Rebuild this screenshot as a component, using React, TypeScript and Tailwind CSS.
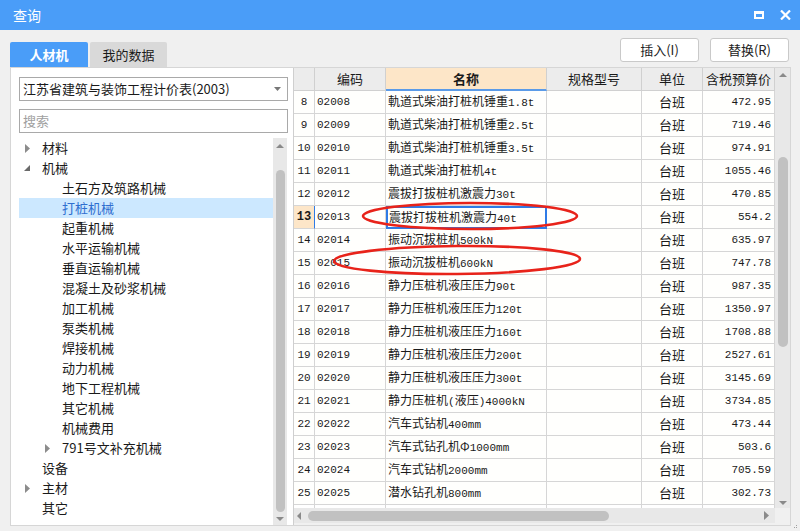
import React from "react";

const ui = "font-['Noto_Sans_CJK_SC',sans-serif]";
const mono = "font-['Liberation_Mono','Noto_Sans_CJK_SC',monospace]";

const rows = [
  ["8", "02008", "軌道式柴油打桩机锤重1.8t", "472.95"],
  ["9", "02009", "軌道式柴油打桩机锤重2.5t", "719.46"],
  ["10", "02010", "軌道式柴油打桩机锤重3.5t", "974.91"],
  ["11", "02011", "軌道式柴油打桩机4t", "1055.46"],
  ["12", "02012", "震拔打拔桩机激震力30t", "470.85"],
  ["13", "02013", "震拔打拔桩机激震力40t", "554.2"],
  ["14", "02014", "振动沉拔桩机500kN", "635.97"],
  ["15", "02015", "振动沉拔桩机600kN", "747.78"],
  ["16", "02016", "静力压桩机液压压力90t", "987.35"],
  ["17", "02017", "静力压桩机液压压力120t", "1350.97"],
  ["18", "02018", "静力压桩机液压压力160t", "1708.88"],
  ["19", "02019", "静力压桩机液压压力200t", "2527.61"],
  ["20", "02020", "静力压桩机液压压力300t", "3145.69"],
  ["21", "02021", "静力压桩机(液压)4000kN", "3734.85"],
  ["22", "02022", "汽车式钻机400mm", "473.44"],
  ["23", "02023", "汽车式钻孔机Φ1000mm", "503.6"],
  ["24", "02024", "汽车式钻机2000mm", "705.59"],
  ["25", "02025", "潜水钻孔机800mm", "302.73"],
];

// tree rows: [label, level, arrow]
const tree: [string, number, "none" | "closed" | "open"][] = [
  ["材料", 1, "closed"],
  ["机械", 1, "open"],
  ["土石方及筑路机械", 2, "none"],
  ["打桩机械", 2, "none"],
  ["起重机械", 2, "none"],
  ["水平运输机械", 2, "none"],
  ["垂直运输机械", 2, "none"],
  ["混凝土及砂浆机械", 2, "none"],
  ["加工机械", 2, "none"],
  ["泵类机械", 2, "none"],
  ["焊接机械", 2, "none"],
  ["动力机械", 2, "none"],
  ["地下工程机械", 2, "none"],
  ["其它机械", 2, "none"],
  ["机械费用", 2, "none"],
  ["791号文补充机械", 2, "closed"],
  ["设备", 1, "none"],
  ["主材", 1, "closed"],
  ["其它", 1, "none"],
];

// latin runs in the grid use a narrow mono face, CJK stays in the sans face
function Mixed({ text }: { text: string }) {
  const parts = text.match(/[\x20-\x7e]+|[^\x20-\x7e]+/g) ?? [];
  return (
    <span>
      {parts.map((p, i) =>
        /^[\x20-\x7e]+$/.test(p) ? (
          <span key={i} className={`${mono} text-[11px]`}>
            {p}
          </span>
        ) : (
          <span key={i}>{p}</span>
        )
      )}
    </span>
  );
}

function Closed({ color = "#8c8c8c" }: { color?: string }) {
  return (
    <svg width="5" height="9" viewBox="0 0 5 9">
      <polygon points="0,0 5,4.5 0,9" fill={color} />
    </svg>
  );
}

function Open() {
  return (
    <svg width="6" height="6" viewBox="0 0 6 6">
      <polygon points="6,0 6,6 0,6" fill="#6a6a6a" />
    </svg>
  );
}

function Up() {
  return (
    <svg width="8" height="4" viewBox="0 0 8 4">
      <polygon points="0,4 4,0 8,4" fill="#8a8a8a" />
    </svg>
  );
}

function Down() {
  return (
    <svg width="8" height="4" viewBox="0 0 8 4">
      <polygon points="0,0 8,0 4,4" fill="#8a8a8a" />
    </svg>
  );
}

export default function App() {
  return (
    <div className={`${ui} relative w-[800px] h-[531px] bg-[#f0f0f0] flex flex-col overflow-hidden text-[#1a1a1a]`}>
      {/* Title bar */}
      <div className="h-[30px] bg-[#4a9df8] flex items-center justify-between pl-[13px] pr-[9px] shrink-0">
        <span className="text-white text-[14px]">查询</span>
        <div className="flex items-center gap-[16px]">
          <div className="w-[10px] h-[8px] border-white border-2 border-t-[3px]" />
          <svg width="11" height="10" viewBox="0 0 11 10">
            <path d="M1 0.5 L10 9.5 M10 0.5 L1 9.5" stroke="#fff" strokeWidth="2.2" />
          </svg>
        </div>
      </div>

      <div className="flex-1 flex flex-col pl-[10px] pr-[9px]">
        {/* Tabs and buttons */}
        <div className="h-[37px] flex shrink-0">
          <div className="flex items-end">
            <div className="w-[78px] h-[25px] bg-[#4a9df8] text-white text-[13px] font-bold flex items-center justify-center rounded-t-[2px]">
              人材机
            </div>
            <div className="w-[77px] h-[25px] ml-[2px] bg-[#d9d9d9] text-[13px] flex items-center justify-center rounded-t-[2px]">
              我的数据
            </div>
          </div>
          <div className="ml-auto mt-[8px] mr-[2px] flex gap-[11px] self-start">
            <button className="w-[79px] h-[24px] bg-white border border-[#c9c9c9] rounded-[3px] text-[13px] text-[#222]">
              插入(I)
            </button>
            <button className="w-[79px] h-[24px] bg-white border border-[#c9c9c9] rounded-[3px] text-[13px] text-[#222]">
              替换(R)
            </button>
          </div>
        </div>

        {/* Panels */}
        <div className="h-[459px] flex border border-[#d6d6d6] bg-white">
          {/* Left pane */}
          <div className="w-[282px] flex flex-col pl-[8px] pr-[5px] pt-[9px]">
            <div className="h-[24px] border border-[#a9a9a9] flex items-center pl-[3px] pr-[6px] text-[13px]">
              <span>江苏省建筑与装饰工程计价表(2003)</span>
              <svg className="ml-auto" width="7" height="4" viewBox="0 0 7 4">
                <polygon points="0,0 7,0 3.5,4" fill="#777" />
              </svg>
            </div>
            <div className="h-[24px] mt-[8px] border border-[#a9a9a9] flex items-center pl-[3px] text-[13px] text-[#a0a0a0]">
              搜索
            </div>
            <div className="mt-[5px] flex flex-1">
              <div className="w-[254px] flex flex-col">
                {tree.map(([label, level, arrow]) => {
                  const sel = label === "打桩机械";
                  return (
                    <div
                      key={label}
                      className={`h-[20px] flex items-center text-[13px] ${sel ? "bg-[#cce8ff] text-[#2f6fd0]" : ""}`}
                    >
                      <div className={`${level === 1 ? "w-[23px]" : "w-[43px]"} flex justify-end pr-[12px] items-center`}>
                        {arrow === "closed" && <Closed />}
                        {arrow === "open" && <Open />}
                      </div>
                      <span>{label}</span>
                    </div>
                  );
                })}
              </div>
              <div className="w-[14px] bg-[#e8e8e8] flex flex-col items-center">
                <div className="h-[10px] flex items-end">
                  <Up />
                </div>
                <div className="mt-[22px] w-[9px] h-[342px] rounded-full bg-[#c1c1c1]" />
                <div className="mt-[5px]">
                  <Down />
                </div>
              </div>
            </div>
          </div>

          {/* Grid pane */}
          <div className="flex-1 border-l border-[#cfcfcf] flex flex-col">
            <div className="h-[440px] flex">
              <div className="w-[481px] flex flex-col overflow-hidden">
                <div className="h-[23px] flex shrink-0 text-[13px] bg-[#ececec] border-b border-[#d0d0d0]">
                  <div className="w-[21px] border-r border-[#d0d0d0]" />
                  <div className="w-[71px] border-r border-[#d0d0d0] flex items-center justify-center">编码</div>
                  <div className="w-[161px] border-r border-[#d0d0d0] bg-[#fde6c8] font-bold flex items-center justify-center border-b-2 border-b-[#5b9be8] -mb-px">
                    名称
                  </div>
                  <div className="w-[95px] border-r border-[#d0d0d0] flex items-center justify-center">规格型号</div>
                  <div className="w-[61px] border-r border-[#d0d0d0] flex items-center justify-center">单位</div>
                  <div className="w-[72px] border-r border-[#d0d0d0] flex items-center justify-center">含税预算价</div>
                </div>
                {rows.map(([n, code, name, price]) => {
                  const cur = n === "13";
                  return (
                    <div key={n} className="h-[23px] flex shrink-0 bg-[#fffffd]">
                      <div
                        className={`w-[21px] border-b border-r flex items-center justify-center ${mono} ${
                          cur
                            ? "bg-[#fde6c8] font-bold text-[12px] border-r-[#2f7be6] border-b-[#d6d6d6]"
                            : "text-[11px] border-[#d6d6d6]"
                        }`}
                      >
                        {n}
                      </div>
                      <div className={`w-[71px] border-b border-r border-[#d6d6d6] flex items-center pl-[2px] ${mono} text-[11px]`}>
                        {code}
                      </div>
                      <div
                        className={`w-[161px] flex items-center text-[12px] whitespace-nowrap overflow-hidden ${
                          cur ? "border-2 border-[#2f7be6] pl-[1px]" : "border-b border-r border-[#d6d6d6] pl-[2px]"
                        }`}
                      >
                        <Mixed text={name} />
                      </div>
                      <div className="w-[95px] border-b border-r border-[#d6d6d6]" />
                      <div className="w-[61px] border-b border-r border-[#d6d6d6] flex items-center justify-center text-[13px]">
                        台班
                      </div>
                      <div className={`w-[72px] border-b border-r border-[#d6d6d6] flex items-center justify-end pr-[3px] ${mono} text-[11px]`}>
                        {price}
                      </div>
                    </div>
                  );
                })}
                <div className="h-[3px] flex shrink-0">
                  <div className="w-[21px] border-r border-[#d6d6d6]" />
                  <div className="w-[71px] border-r border-[#d6d6d6]" />
                  <div className="w-[161px] border-r border-[#d6d6d6]" />
                  <div className="w-[95px] border-r border-[#d6d6d6]" />
                  <div className="w-[61px] border-r border-[#d6d6d6]" />
                  <div className="w-[72px] border-r border-[#d6d6d6]" />
                </div>
              </div>
              <div className="flex-1 bg-[#e8e8e8] flex flex-col items-center">
                <div className="h-[9px] flex items-end">
                  <Up />
                </div>
                <div className="mt-[80px] w-[10px] h-[190px] rounded-full bg-[#c1c1c1]" />
                <div className="mt-auto mb-[3px]">
                  <Down />
                </div>
              </div>
            </div>
            <div className="flex-1 flex bg-[#f0f0f0]">
              <div className="w-[481px] h-[15px] bg-[#e8e8e8] flex items-center pl-[3px] pr-[6px]">
                <svg width="4" height="8" viewBox="0 0 4 8">
                  <polygon points="4,0 4,8 0,4" fill="#8a8a8a" />
                </svg>
                <div className="ml-[7px] w-[301px] h-[10px] rounded-full bg-[#c1c1c1]" />
                <div className="ml-auto">
                  <Closed color="#8a8a8a" />
                </div>
              </div>
              <div className="flex-1" />
            </div>
          </div>
        </div>
      </div>

      {/* size grip */}
      <div className="absolute right-[3px] bottom-[3px] grid grid-cols-2 gap-[1px]">
        <div className="w-[1px] h-[1px]" />
        <div className="w-[1px] h-[1px] bg-[#a0a0a0]" />
        <div className="w-[1px] h-[1px] bg-[#a0a0a0]" />
        <div className="w-[1px] h-[1px] bg-[#a0a0a0]" />
      </div>

      {/* red annotation marks */}
      <svg className="absolute left-0 top-0 pointer-events-none" width="800" height="531" viewBox="0 0 800 531">
        <ellipse cx="470" cy="216" rx="107" ry="13" fill="none" stroke="#e8231a" strokeWidth="2.6" />
        <ellipse cx="457" cy="260" rx="123" ry="14" fill="none" stroke="#e8231a" strokeWidth="2.6" transform="rotate(-0.5 457 260)" />
      </svg>
    </div>
  );
}
